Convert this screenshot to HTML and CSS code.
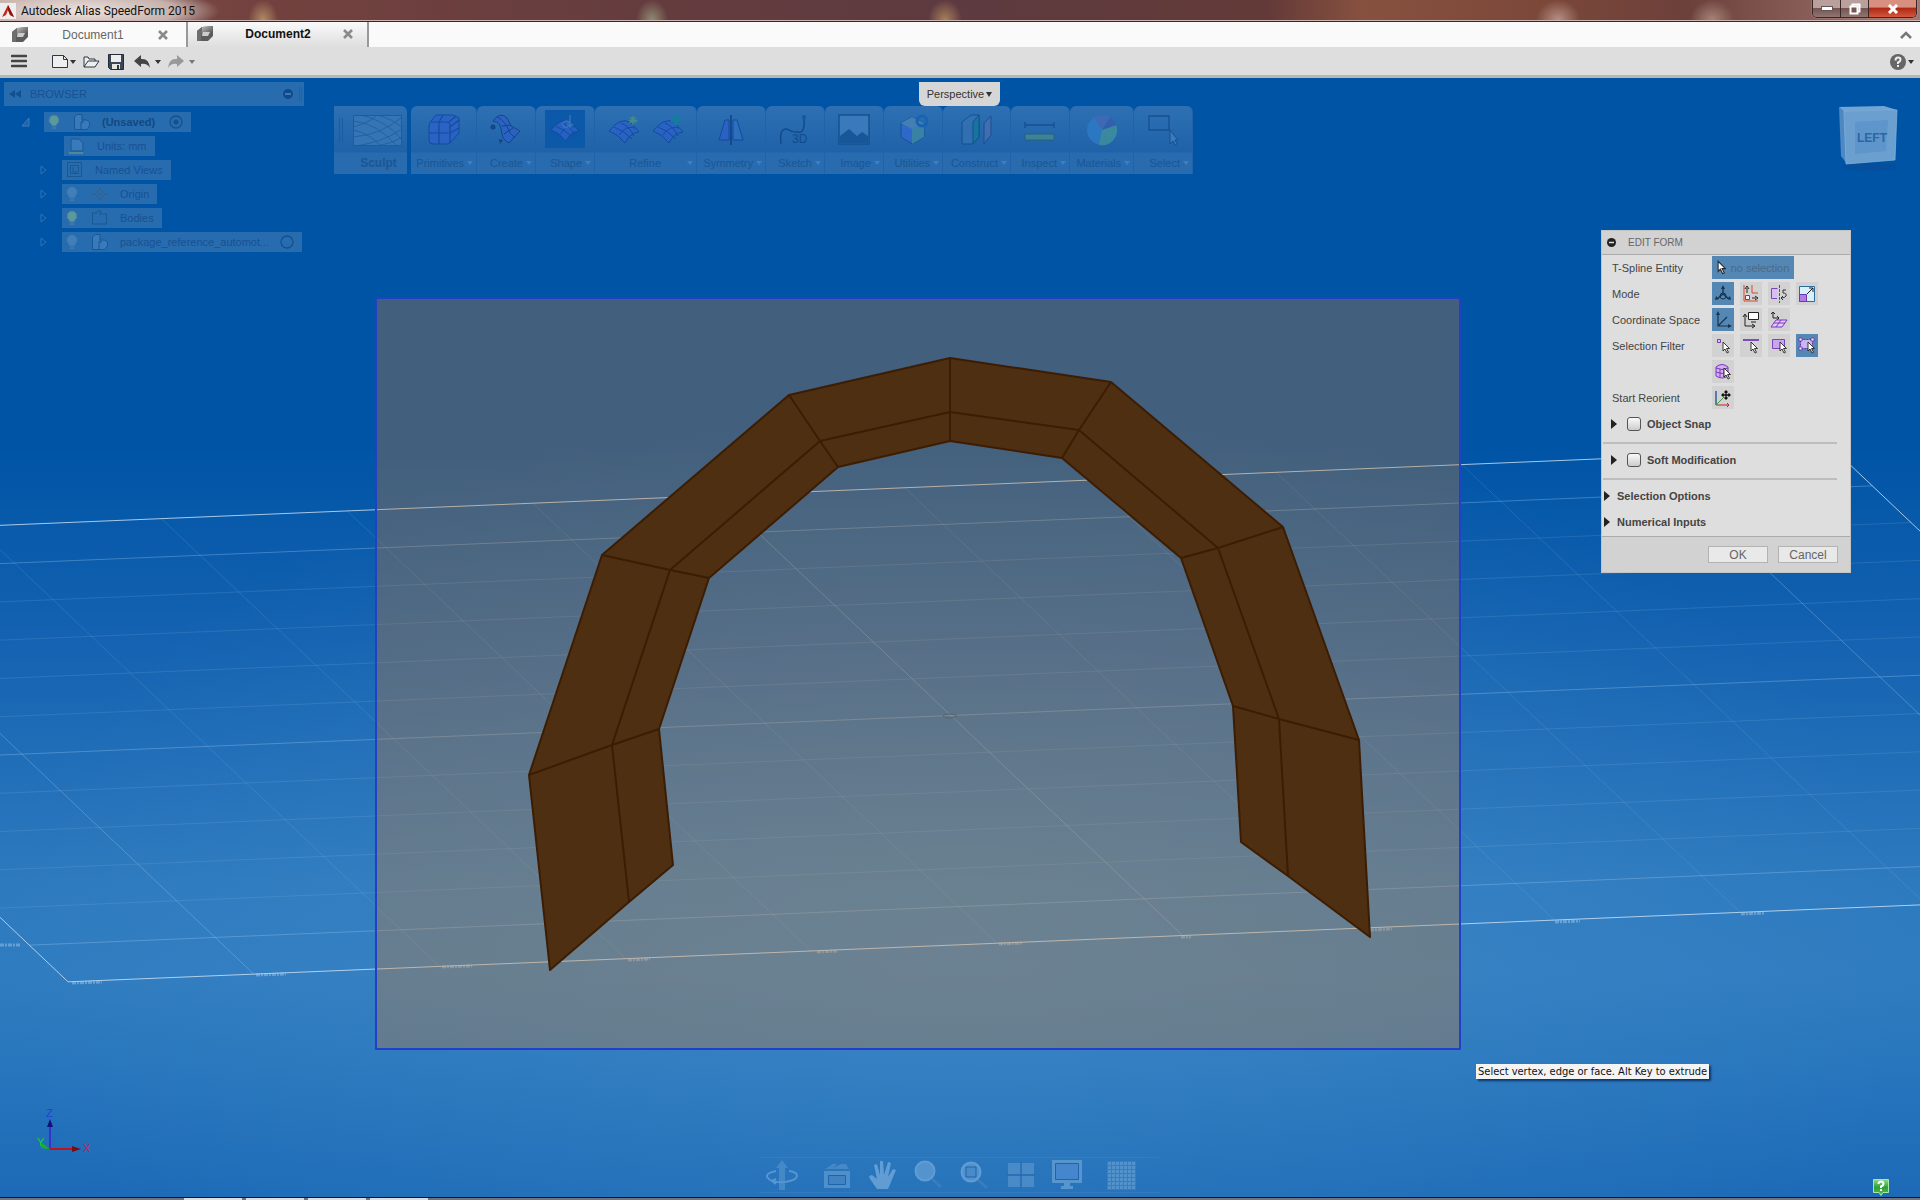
FILE: index.html
```html
<!DOCTYPE html>
<html lang="en">
<head>
<meta charset="utf-8">
<title>Autodesk Alias SpeedForm 2015</title>
<link rel="stylesheet" href="styles.css">
</head>
<body>
<svg class="defs" aria-hidden="true">
  <defs>
    <linearGradient id="cubeGrey" x1="0" y1="0" x2="1" y2="1"><stop offset="0" stop-color="#bbb"/><stop offset="1" stop-color="#444"/></linearGradient>
    <linearGradient id="helpGreen" x1="0" y1="0" x2="0" y2="1"><stop offset="0" stop-color="#8bdc85"/><stop offset=".5" stop-color="#2f9f35"/><stop offset="1" stop-color="#55c458"/></linearGradient>
    <linearGradient id="sky" x1="0" y1="0" x2="0" y2="1"><stop offset="0" stop-color="#0054a6"/><stop offset=".33" stop-color="#0054a6"/><stop offset=".5" stop-color="#1462b1"/><stop offset=".72" stop-color="#2d7abf"/><stop offset=".8" stop-color="#307cc0"/><stop offset=".88" stop-color="#2876bd"/><stop offset="1" stop-color="#1c6ab7"/></linearGradient>
    <radialGradient id="glow" cx=".5" cy=".78" r=".5"><stop offset="0" stop-color="#5c9fd0" stop-opacity=".3"/><stop offset="1" stop-color="#5c9fd0" stop-opacity="0"/></radialGradient>
    <symbol id="doc" viewBox="0 0 16 16"><path d="M0 5l5-4 11-1v10l-5 5H0z" fill="#5c5c5c"/><path d="M5 1l11-1v6l-4 3H5z" fill="url(#cubeGrey)"/><path d="M6 6h7l-2 4H5z" fill="#ccc"/><path d="M0 5l5-4v5l-1 4v5H0z" fill="#6e6e6e"/></symbol>
    <symbol id="close" viewBox="0 0 10 10"><path d="M1 1l8 8M9 1L1 9" stroke="#8a8a8a" stroke-width="2.6"/></symbol>
    <symbol id="cursor" viewBox="0 0 8 13"><path d="M1 1v9l2-2 2 4 1.500-.7-2-3.800H7.500z" fill="#fff" stroke="#222" stroke-width=".9"/></symbol>
    <symbol id="bulb" viewBox="0 0 12 16"><path d="M6 1a5 5 0 0 0-3 9l1 2h4l1-2a5 5 0 0 0-3-9z" fill="currentColor" stroke="#3f79a8"/><path d="M4 13h4v2H4z" fill="#3f79a8"/></symbol>
    <symbol id="part" viewBox="0 0 18 18"><path d="M1.500 4L4 1.500h5V7h5l2.500 2.500V13L14 16.500H1.500zM8 16.500V9l2-2M8 9h3" fill="#387abb" stroke="#1b5791"/></symbol>
    <symbol id="patch" viewBox="0 0 32 30"><path d="M1 16Q12 2 22 7l9 10Q22 18 17 28 10 19 1 16z" fill="#2b62c8" stroke="#10479c"/><path d="M6 12q9 3 18 12M13 8q8 3 13 13M11 20Q18 10 27 13" fill="none" stroke="#10479c"/></symbol>
  </defs>
</svg>

<header class="titlebar">
  <svg class="logo" viewBox="0 0 16 16"><rect width="16" height="16" fill="#eee"/><path d="M8 2l6 12-4-2-2-5-2 5-4 2z" fill="#c9241b"/><path d="M8 2l6 12-4-2-2-5z" fill="#8d1710"/></svg>
  <h1>Autodesk Alias SpeedForm 2015</h1>
  <div class="window-buttons">
    <button aria-label="Minimize"><svg width="12" height="5"><rect x=".5" y=".5" width="11" height="4" fill="#fff" stroke="#655"/></svg></button>
    <button aria-label="Restore"><svg width="12" height="12"><path d="M3.500 1.500h7v7h-7z" fill="none" stroke="#fff" stroke-width="2"/><path d="M1.500 3.500h7v7h-7z" fill="#755" stroke="#fff" stroke-width="2"/></svg></button>
    <button class="quit" aria-label="Close"><svg width="12" height="10"><path d="M2 1l8 8M10 1L2 9" stroke="#fff" stroke-width="3"/></svg></button>
  </div>
</header>

<nav class="tabs">
  <div class="tab"><svg class="i16"><use href="#doc"/></svg><button class="tab-name">Document1</button><button class="tab-close" aria-label="Close Document1"><svg class="i10"><use href="#close"/></svg></button></div>
  <div class="tab active"><svg class="i16"><use href="#doc"/></svg><button class="tab-name">Document2</button><button class="tab-close" aria-label="Close Document2"><svg class="i10"><use href="#close"/></svg></button></div>
  <button class="collapse" aria-label="Collapse"><svg width="12" height="8"><path d="M1 7l5-5 5 5" fill="none" stroke="#777" stroke-width="2.500"/></svg></button>
</nav>

<div class="toolbar">
  <button class="menu" aria-label="Menu"><svg width="16" height="14"><path d="M1 2h14M1 7h14M1 12h14" stroke="#444" stroke-width="2.600" stroke-linecap="round"/></svg></button>
  <button aria-label="New"><svg width="24" height="16"><path d="M.5 1.500h11l4 4v8H.5z" fill="#eee" stroke="#2d3644"/><path d="M11.500 1.500v4h4" fill="none" stroke="#2d3644"/><path d="M18 6h6l-3 4z" fill="#333"/></svg></button>
  <button aria-label="Open"><svg width="18" height="16"><path d="M1 13V3h4l1 2h6v2M1 13l4-6h11l-4 6z" fill="#eee" stroke="#2d3644"/></svg></button>
  <button aria-label="Save"><svg width="19" height="16"><path d="M.5.5h15v15h-13l-2-2z" fill="#3b4758" stroke="#232c38"/><path d="M3 1h10v7H3z" fill="#eee"/><path d="M4 10h8v5H4z" fill="#e5e5e5"/><path d="M9 11h2v4H9z" fill="#333"/></svg></button>
  <button aria-label="Undo"><svg width="27" height="16"><path d="M0 7l7-6v4q8-1 9 9-3-5-9-4v3z" fill="#444"/><path d="M21 6h6l-3 4z" fill="#333"/></svg></button>
  <button aria-label="Redo"><svg width="27" height="16"><path d="M16 7L9 1v4Q1 4 0 14q3-5 9-4v3z" fill="#999"/><path d="M21 6h6l-3 4z" fill="#777"/></svg></button>
  <button class="help" aria-label="Help"><svg width="24" height="18"><circle cx="8" cy="9" r="8" fill="#666"/><path d="M5.500 7.500q0-3 2.500-3t2.500 2.300Q10.500 8.500 8 9.500V11m0 1v2" fill="none" stroke="#eee" stroke-width="2"/><path d="M18 7h6l-3 4z" fill="#333"/></svg></button>
</div>

<main class="viewport">
  <svg class="scene" viewBox="0 78 1920 1119" preserveAspectRatio="none">
    <rect y="78" width="1920" height="1119" fill="url(#sky)"/>
    <rect y="78" width="1920" height="1119" fill="url(#glow)"/>
    <g class="grid" transform="matrix(185.8 -7.72 38.67 36.67 -396 541.8)">
      <path class="minor" d="M0 2h12M0 3h12M0 4h12M0 5h12M0 7h12M0 8h12M0 9h12M0 10h12M2 0v12M3 0v12M4 0v12M5 0v12M7 0v12M8 0v12M9 0v12M10 0v12"/>
      <path class="major" d="M0 1h12M0 6h12M0 11h12M1 0v12M6 0v12M11 0v12"/>
      <path class="edge" d="M0 0h12v12H0z"/>
    </g>
    <path class="ticks" d="M72 983l30-1M256 975l30-1M442 967l30-1M628 960l22-1M817 952l20-1M999 944l24-1M1181 937h10M1370 930l22-1M1555 922l25-1M1741 914l24-1M0 945h21"/>
    <rect class="marquee" x="376" y="298" width="1084" height="751"/>
    <ellipse cx="950" cy="716" rx="7" ry="2" fill="none" stroke="#59656a"/>
    <g class="arch">
      <path class="arch-body" d="M550 970L529 775 602 555 789 395 950 358 1111 382 1283 527 1359 740 1370 937 1288 876 1241 842 1233 706 1181 558 1062 458 950 441 838 467 709 578 659 729 673 865 629 902z"/>
      <path d="M629 902L612 745 670 570 820 441 950 412 1079 430 1218 548 1279 719 1288 876M529 775l83-30 47-16M602 555l68 15 39 8M789 395l31 46 18 26M950 358v83M1111 382l-32 48-17 28M1283 527l-65 21-37 10M1359 740l-80-21-46-13"/>
    </g>
    <g class="triad">
      <path d="M50 1149v-24" stroke="#3a2fd0" stroke-width="2"/><path d="M50 1119l3 8h-6z" fill="#10107a"/>
      <path d="M50 1149h24" stroke="#c0141c" stroke-width="2"/><path d="M81 1149l-9-3v6z" fill="#7a0c14"/>
      <path d="M50 1149l-9-1 1-5z" fill="#12b51c"/>
      <text x="46" y="1117" fill="#2a3bd8">Z</text><text x="83" y="1152" fill="#c0245c">X</text><text x="37" y="1146" fill="#17d522">Y</text>
    </g>
  </svg>

  <aside class="browser">
    <header>
      <svg width="12" height="8"><path d="M6 0v8L0 4zM12 0v8L6 4z" fill="#144f91"/></svg>
      <h2>BROWSER</h2>
      <svg width="10" height="10"><circle cx="5" cy="5" r="5" fill="#11498b"/><path d="M2 5h6" stroke="#3b79b6" stroke-width="2"/></svg>
      <svg width="3" height="14"><path d="M.5 0v14M2.500 0v14" stroke="#2461a0"/></svg>
    </header>
    <ul>
      <li class="root"><svg class="twist" viewBox="0 0 8 10"><path d="M7 1v8H0z" fill="#2361a6" stroke="#3e7dbb"/></svg><div class="node"><svg class="bulb on"><use href="#bulb"/></svg><svg class="i18"><use href="#part"/></svg><b>(Unsaved)</b><svg class="i14 end" viewBox="0 0 14 14"><circle cx="7" cy="7" r="6" fill="none" stroke="#164f8c" stroke-width="1.300"/><circle cx="7" cy="7" r="2.500" fill="#164f8c"/></svg></div></li>
      <li class="leaf"><div class="node"><svg class="i18" viewBox="0 0 18 18"><path d="M3 2h8l4 4v8H3z" fill="#387abb" stroke="#1b5791"/><path d="M1 16h14" stroke="#4e8a93" stroke-width="2"/></svg><span>Units: mm</span></div></li>
      <li><svg class="twist" viewBox="0 0 8 10"><path d="M1 1v8l5-4z" fill="none" stroke="#3272b3"/></svg><div class="node"><svg class="i18" viewBox="0 0 18 18"><path d="M1.500 1.500h14v14h-14zM4.500 4.500h8v8h-8zM7 6v5h4" fill="none" stroke="#1b5791"/></svg><span>Named Views</span></div></li>
      <li><svg class="twist" viewBox="0 0 8 10"><path d="M1 1v8l5-4z" fill="none" stroke="#3272b3"/></svg><div class="node"><svg class="bulb"><use href="#bulb"/></svg><svg class="i18" viewBox="0 0 18 18"><path d="M9 4l5 5-5 5-5-5zM1 9h4M13 9h4M9 2v3M9 13v3M7 9h4" fill="none" stroke="#3d5d80"/></svg><span>Origin</span></div></li>
      <li><svg class="twist" viewBox="0 0 8 10"><path d="M1 1v8l5-4z" fill="none" stroke="#3272b3"/></svg><div class="node"><svg class="bulb on"><use href="#bulb"/></svg><svg class="i18" viewBox="0 0 18 18"><path d="M1.500 15V4h4l1-2h4l-2 3h7v10z" fill="none" stroke="#1b5791"/></svg><span>Bodies</span></div></li>
      <li><svg class="twist" viewBox="0 0 8 10"><path d="M1 1v8l5-4z" fill="none" stroke="#3272b3"/></svg><div class="node wide"><svg class="bulb"><use href="#bulb"/></svg><svg class="i18"><use href="#part"/></svg><span>package_reference_automot...</span><svg class="i14 end" viewBox="0 0 14 14"><circle cx="7" cy="7" r="6" fill="none" stroke="#164f8c" stroke-width="1.300"/></svg></div></li>
    </ul>
  </aside>

  <div class="ribbon">
    <button class="sculpt"><span class="art"><svg width="4" height="24"><path d="M.5 0v24M3.500 0v24" stroke="#1d5b9f"/></svg><svg width="49" height="31"><path d="M.5.500h48v30H.5z" fill="#3575b5" stroke="#1f5c9c"/><path d="M0 6q24 2 44 25M0 15q16 3 28 16M8 0q26 6 40 24M25 0q14 4 24 12M0 22Q28 20 49 2M3 31Q30 27 49 14M22 31q16-2 27-9M0 12Q16 8 24 0" fill="none" stroke="#1f5c9c" stroke-width=".8"/></svg></span><b>Sculpt</b></button>
    <div class="groups">
      <button class="w66"><span class="art"><svg width="32" height="32"><path d="M1 12q0-4 3-6l4-5h17l6 3v15l-8 9-3 2H5q-4 0-4-4z" fill="#2b62c8" stroke="#10479c"/><path d="M3 8h16q3 0 3 4v17M21 8l7-6M31 6l-9 7M11 8v22M15 1l-4 7M1 19h20M22 19l9-5" fill="none" stroke="#10479c" stroke-width="1.200"/></svg></span><span class="cap">Primitives</span></button>
      <button class="w59"><span class="art"><svg width="32" height="32"><path d="M3 7Q10-3 17 4l4 8q4 2 9 5l-11 12q-6-3-7-9-1-10-5-12z" fill="#2b62c8" stroke="#123f7d"/><path d="M7 3q8 3 13 16l5 5M12 12l9-1M14 20l9-6" fill="none" stroke="#123f7d"/><circle cx="3" cy="13" r="2.500" fill="#123f7d"/><path d="M9 25l4 1-3 4z" fill="#123f7d"/></svg></span><span class="cap">Create</span></button>
      <button class="w59"><span class="art picked"><svg width="30" height="30"><use href="#patch"/><path d="M20 1v12m-3-3l3 3 3-3M12 10q5-6 8 0-4 8-8 0z" fill="none" stroke="#3a7cc0" stroke-width="1.400"/></svg></span><span class="cap">Shape</span></button>
      <button class="w102"><span class="art two"><svg width="32" height="30"><use href="#patch"/><path d="M25 1v9M20.500 5.500h9M22 2l6 6M28 2l-6 6" stroke="#4b9281" stroke-width="1.400"/></svg><svg width="32" height="30"><use href="#patch"/><path d="M24 0v10M19 5h10" stroke="#137f9c" stroke-width="4"/></svg></span><span class="cap">Refine</span></button>
      <button class="w69"><span class="art"><svg width="28" height="30"><path d="M12 5v20H2L8 5z" fill="#2b62c8" stroke="#10479c"/><path d="M16 5h4l6 20H16z" fill="#2f70c0" stroke="#10479c"/><path d="M14 0v30" stroke="#0c376f" stroke-width="1.400"/></svg></span><span class="cap">Symmetry</span></button>
      <button class="w59"><span class="art"><svg width="34" height="34"><path d="M3 31q-2-16 6-15 6 4 14 3 4-2 3-14" fill="none" stroke="#0f4687" stroke-width="1.500"/><circle cx="26" cy="4" r="2" fill="#13549c"/><text x="14" y="30">3D</text></svg></span><span class="cap">Sketch</span></button>
      <button class="w59"><span class="art"><svg width="32" height="32"><path d="M1 1h30v29H1z" fill="#3c7dbd" stroke="#134d8d" stroke-width="1.500"/><path d="M2 22l9-7 8 7 5-4 6 4v7H2z" fill="#155596"/></svg></span><span class="cap">Image</span></button>
      <button class="w59"><span class="art"><svg width="30" height="32"><path d="M3 9l11-6 12 6v14l-12 7-11-7z" fill="#3069cf" stroke="#174b8e"/><path d="M3 9l11-6 12 6-12 6z" fill="#4883b4"/><path d="M14 15l12-6v14l-12 7z" fill="#3d87a5"/><circle cx="24" cy="7" r="5" fill="none" stroke="#1462b6" stroke-width="3"/></svg></span><span class="cap">Utilities</span></button>
      <button class="w68"><span class="art"><svg width="32" height="32"><path d="M1 8l9-7h8v22l-6 7H1z" fill="#3371b2" stroke="#134d8d"/><path d="M12 8l6-7v22l-6 7z" fill="#147899" stroke="#134d8d"/><path d="M23 9l7-7v19l-7 9z" fill="#476eaf" stroke="#134d8d"/></svg></span><span class="cap">Construct</span></button>
      <button class="w59"><span class="art"><svg width="32" height="28"><path d="M1 6v6M30 6v6M1 9h29" stroke="#134d8d" stroke-width="1.300"/><path d="M1 18h29v6H1z" fill="#408b8e" stroke="#285f80"/></svg></span><span class="cap">Inspect</span></button>
      <button class="w64"><span class="art"><svg width="32" height="32"><circle cx="16" cy="16" r="15" fill="#2d7ac6"/><path d="M16 16L8 3a15 15 0 0 1 16 0z" fill="#4269b7"/><path d="M16 16l14-5a15 15 0 0 1-17 20z" fill="#3f8f9d"/><path d="M16 16L24 3a15 15 0 0 1 6 8z" fill="#355dac"/></svg></span><span class="cap">Materials</span></button>
      <button class="w59"><span class="art"><svg width="32" height="32"><path d="M2 2h20v14H2z" fill="none" stroke="#134d8d" stroke-width="1.400"/><path d="M23 16v14l3-3 2 4 2-1-2-4h3z" fill="#3e7fbd" stroke="#134d8d"/></svg></span><span class="cap">Select</span></button>
    </div>
  </div>

  <button class="camera">Perspective<svg width="6" height="5"><path d="M0 0h6L3 5z" fill="#333"/></svg></button>

  <aside class="right">
    <svg class="cube" width="66" height="66" viewBox="0 0 66 66">
      <ellipse cx="34" cy="61" rx="28" ry="4" fill="#0a4a92" opacity=".5"/>
      <path d="M4 1l45-1 13 4L8 5z" fill="#74a5d2"/><path d="M4 1l5 4 3 53-6-8z" fill="#4d88c2"/><path d="M9 5l53-1-2 50-49 4z" fill="#6a9fd0" stroke="#86b4de" stroke-width=".7"/><path d="M20 16l33-2-2 31-31 3z" fill="#5e96cb"/>
      <text x="22" y="36">LEFT</text>
    </svg>

    <form class="panel">
      <header><svg width="9" height="9"><circle cx="4.500" cy="4.500" r="4.500" fill="#222"/><path d="M2 4.500h5" stroke="#ddd" stroke-width="1.500"/></svg><h2>EDIT FORM</h2></header>
      <div class="fields">
        <span>T-Spline Entity</span>
        <div><button type="button" class="pick"><svg width="9" height="15"><use href="#cursor"/></svg>no selection</button></div>
        <span>Mode</span>
        <div>
          <button type="button" class="on" aria-label="Multi"><svg width="18" height="18"><path d="M9 3v6l-6 5M9 9l6 5" fill="none" stroke="#173550" stroke-width="1.400"/><path d="M9 0l2 4H7zM1 15l1-4 3 3zM17 15l-1-4-3 3z" fill="#173550"/><circle cx="9" cy="11" r="3" fill="none" stroke="#173550"/></svg></button>
          <button type="button" aria-label="Translate"><svg width="18" height="18"><path d="M2 0v16h14M10 0v8h6" fill="none" stroke="#d9472b"/><path d="M5 8V3M3 4l2-3 2 3M10 13h4m-1-2l3 2-3 2" fill="none" stroke="#222"/><path d="M3.500 10.500h4v4h-4z" fill="#fff" stroke="#6b3aa8"/></svg></button>
          <button type="button" aria-label="Rotate"><svg width="18" height="18"><path d="M7 13.500H1.500v-10h6" fill="#d7bff2" stroke="#7b45b8"/><path d="M9.500 0v18" stroke="#d02030" stroke-dasharray="3 1"/><path d="M16 5h-3v3q4 0 3 3-1 2-5 2l2-2m-2 2l2 2" fill="none" stroke="#333"/></svg></button>
          <button type="button" aria-label="Scale"><svg width="18" height="18"><path d="M1.500 1.500h15v15h-15z" fill="#d6f1fc" stroke="#2d6d9c"/><path d="M1.500 9.500h7v7h-7z" fill="#b47be8" stroke="#6b3aa8"/><path d="M9 9l6-6m-4 0h4v4" fill="none" stroke="#222"/></svg></button>
        </div>
        <span>Coordinate Space</span>
        <div>
          <button type="button" class="on" aria-label="World"><svg width="18" height="18"><path d="M4 3v12h11M4 15l9-9" fill="none" stroke="#173550" stroke-width="1.200"/><path d="M4 0l2 4H2zM18 15l-4-2v4z" fill="#173550"/></svg></button>
          <button type="button" aria-label="View"><svg width="18" height="18"><path d="M3 4v11h9M1 6l2-3 2 3M10 13l3 2-3 2" fill="none" stroke="#222"/><path d="M6.500 1.500h10v7h-10zM9 11h5" fill="#fff" stroke="#222"/></svg></button>
          <button type="button" aria-label="Local"><svg width="18" height="18"><path d="M3 1v6h6M1 3l2-2 2 2M7 5l2 2-2 2" fill="none" stroke="#222"/><path d="M6 9h11l-5 7H1zM4 12h11M11 9l-5 7" fill="#e5cffa" stroke="#7b35c0"/></svg></button>
        </div>
        <span>Selection Filter</span>
        <div>
          <button type="button" aria-label="Vertex"><svg width="18" height="18"><path d="M3.500 2.500h3v3h-3z" fill="none" stroke="#7b35c0"/><svg x="8" y="4" width="8" height="13"><use href="#cursor"/></svg></svg></button>
          <button type="button" aria-label="Edge"><svg width="18" height="18"><path d="M1 3h16" stroke="#6b2ab0" stroke-width="1.600"/><svg x="8" y="4" width="8" height="13"><use href="#cursor"/></svg></svg></button>
          <button type="button" aria-label="Face"><svg width="18" height="18"><path d="M2.500 2.500h12v9h-12z" fill="#c9a5ef" stroke="#7b45b8"/><svg x="9" y="4" width="8" height="13"><use href="#cursor"/></svg></svg></button>
          <button type="button" class="on" aria-label="All"><svg width="18" height="18"><path d="M2.500 2.500h12v9h-12z" fill="#c9b5ef" stroke="#6b2ab0" stroke-dasharray="2 1"/><path d="M1 1h3v3H1zM13 1h3v3h-3zM1 10h3v3H1z" fill="#eee" stroke="#6b2ab0" stroke-width=".8"/><svg x="9" y="4" width="8" height="13"><use href="#cursor"/></svg></svg></button>
        </div>
        <span></span>
        <div><button type="button" aria-label="Body"><svg width="18" height="18"><path d="M2 4q6-5 12 0v9q-6 4-12 0z" fill="#d2b0f2" stroke="#7b35c0"/><path d="M2 5q6 3 12 0M2 9q6 3 12 0M6 6v8M10 6v8" fill="none" stroke="#7b35c0"/><svg x="9" y="4" width="8" height="13"><use href="#cursor"/></svg></svg></button></div>
        <span>Start Reorient</span>
        <div><button type="button" aria-label="Start Reorient"><svg width="18" height="18"><path d="M2 2v14" stroke="#28559c" stroke-width="1.400"/><path d="M2 16h13m-2-2l2 2-2 2" stroke="#c02035" fill="none"/><path d="M2 16l8-8" stroke="#3aa03a"/><path d="M12 2v8M8 6h8M10.500 3.500L12 2l1.500 1.500M10.500 8.500L12 10l1.500-1.500M9.500 4.500L8 6l1.500 1.500M14.500 4.500L16 6l-1.500 1.500" fill="none" stroke="#111" stroke-width="1.300"/></svg></button></div>
      </div>
      <div class="option"><button type="button" class="tri" aria-label="Expand Object Snap"></button><label><input type="checkbox">Object Snap</label></div>
      <hr>
      <div class="option"><button type="button" class="tri" aria-label="Expand Soft Modification"></button><label><input type="checkbox">Soft Modification</label></div>
      <hr>
      <button type="button" class="section">Selection Options</button>
      <button type="button" class="section">Numerical Inputs</button>
      <footer><button type="button">OK</button><button type="button">Cancel</button></footer>
    </form>
  </aside>

  <div class="tooltip" role="tooltip">Select vertex, edge or face. Alt Key to extrude</div>

  <div class="navbar">
    <button class="drop" aria-label="Orbit"><svg width="32" height="32"><path d="M16 1l6 8h-3v22h-6V9h-3z" fill="#4b8cc8"/><path d="M10 12q-10 2-9 6 4 6 18 5 12-2 12-6 0-4-8-5M10 20l-4 2 4 3" fill="none" stroke="#5e9dd4" stroke-width="2"/></svg></button>
    <button aria-label="Look at"><svg width="28" height="28"><path d="M2 8l8-5h4l-4 4 8-4h5l3 5z" fill="#4b8cc8"/><path d="M1 10h26v17H1z" fill="#5795cd"/><path d="M5.500 14.500h17v9h-17z" fill="#4685c5" stroke="#1d62a8"/></svg></button>
    <button aria-label="Pan"><svg width="30" height="30"><path d="M9 29L2 19l-1-3 3-1 5 4L6 5l3-1 3 11V1h3l1 14 4-13 3 1-3 14 5-8 3 1-5 12-3 7z" fill="#6ba5d9"/></svg></button>
    <button aria-label="Zoom"><svg width="30" height="30"><circle cx="11" cy="11" r="9.500" fill="#5b9ad3" stroke="#69a4d9" stroke-width="2"/><path d="M18 19l9 8" stroke="#3f7fbb" stroke-width="3"/></svg></button>
    <button aria-label="Fit"><svg width="30" height="30"><circle cx="11" cy="12" r="9.500" fill="#5b9ad3" stroke="#69a4d9" stroke-width="2"/><path d="M6 7h10v10H6z" fill="#4f90cd" stroke="#1d5fa8"/><path d="M18 20l9 8" stroke="#3f7fbb" stroke-width="3"/></svg></button>
    <button aria-label="Views"><svg width="28" height="26"><path d="M1 1h26v24H1z" fill="#4f8fcb"/><path d="M14 0v26M0 13h28" stroke="#2368b0" stroke-width="1.400"/></svg></button>
    <button aria-label="Display"><svg width="30" height="30"><path d="M0 0h30v23H0z" fill="#5f9bd1"/><path d="M3.500 3.500h23v16h-23z" fill="#4a8ad0" stroke="#1f61aa"/><path d="M12 23h6v3h3v3H9v-3h3z" fill="#5f9bd1"/></svg></button>
    <button class="last" aria-label="Grid"><svg width="29" height="29"><path d="M0 0h29v29H0z" fill="#5a98d0"/><path d="M.5 0v29M4.500 0v29M8.500 0v29M12.500 0v29M16.500 0v29M20.500 0v29M24.500 0v29M28.500 0v29M0 .5h29M0 4.500h29M0 8.500h29M0 12.500h29M0 16.500h29M0 20.500h29M0 24.500h29M0 28.500h29" stroke="#3c7fbf"/></svg></button>
  </div>

  <button class="assist" aria-label="Assistance"><svg width="16" height="17"><path d="M.5.500h15v13H10l-2 3-2-3H.5z" fill="url(#helpGreen)" stroke="#a8e8a6"/><path d="M5.500 5q0-2.500 2.500-2.500T10.500 5Q10.500 6.500 8 7.500V9m0 1v2" fill="none" stroke="#fff" stroke-width="2"/></svg></button>
</main>
<div class="taskbar"><i></i><i></i><i></i><i></i></div>
</body>
</html>
```
FILE: styles.css
```css
* { box-sizing: border-box; }
body {
  margin: 0;
  height: 100vh;
  display: flex;
  flex-direction: column;
  overflow: hidden;
  font: 11px/14px "Liberation Sans", Arial, sans-serif;
  color: #444;
}
button { border: 0; padding: 0; background: none; font: inherit; color: inherit; }
svg { display: block; flex: none; }
h1, h2, ul { margin: 0; padding: 0; font-weight: normal; list-style: none; }
.defs { position: absolute; width: 0; height: 0; }
.i10 { width: 10px; height: 10px; }
.i14 { width: 14px; height: 14px; }
.i16 { width: 16px; height: 16px; }
.i18 { width: 18px; height: 18px; }

.titlebar {
  flex: none;
  height: 22px;
  display: flex;
  align-items: flex-start;
  padding: 0 3px 0 0;
  border-bottom: 1px solid #3a2527;
  box-shadow: inset 0 -1px #cbb3b0;
  background:
    radial-gradient(closest-side, #eee4e0 0, #d8c8c3cc 70%, transparent) -60px -14px / 280px 50px no-repeat,
    radial-gradient(closest-side, #b08a63, transparent) 248px 0 / 30px 40px no-repeat,
    radial-gradient(closest-side, #8f8a72, transparent) 636px 0 / 32px 40px no-repeat,
    radial-gradient(closest-side, #a87f5a, transparent) 928px 0 / 34px 40px no-repeat,
    radial-gradient(closest-side, #b58f83, transparent) 1536px 0 / 44px 40px no-repeat,
    radial-gradient(closest-side, #a78478, transparent) 1690px 0 / 44px 40px no-repeat,
    linear-gradient(90deg, #8a6560, #74423f 12%, #643c3e 35%, #5d3a40 50%, #633a38 66%, #87513f 71%, #7c4839 80%, #6c403b 88%, #a47872);
}
.logo { width: 16px; height: 16px; margin-top: 3px; }
.titlebar h1 { margin-left: 5px; font: 12px/22px Roboto, "Open Sans", sans-serif; color: #111; }
.window-buttons { margin-left: auto; display: flex; border: 1px solid #3b2626; border-top: 0; border-radius: 0 0 5px 5px; overflow: hidden; box-shadow: 0 0 1px #fff; }
.window-buttons button { width: 28px; height: 17px; display: flex; align-items: center; justify-content: center; background: linear-gradient(#b9a09d 45%, #755553 50%, #917572); border-right: 1px solid #3b2626; }
.window-buttons .quit { width: 47px; border: 0; background: linear-gradient(#d98f80 40%, #b02a17 50%, #d4573b); }

.tabs { flex: none; height: 25px; display: flex; background: #fafafa; }
.tab { width: 188px; display: flex; align-items: center; padding: 0 18px 0 12px; border-right: 2px solid #999; font-size: 12px; color: #666; }
.tab.active { width: 181px; padding: 0 14px 2px 9px; background: linear-gradient(#fafafa, #dedede); color: #111; font-weight: bold; }
.tab-name { flex: 1; text-align: center; }
.collapse { margin: 0 8px 0 auto; }

.toolbar { flex: none; height: 31px; display: flex; align-items: center; gap: 7px; padding: 1px 6px 0 11px; background: #dedede; border-bottom: 3px solid #b9b7b2; }
.toolbar .menu { margin: 0 18px 2px 0; }
.toolbar .help { margin-left: auto; }

.viewport { position: relative; flex: 1; min-height: 0; display: flex; align-items: flex-start; padding: 4px; }
.scene { position: absolute; inset: 0; width: 100%; height: 100%; }
.grid path { fill: none; stroke: #9cc4ec; vector-effect: non-scaling-stroke; stroke-width: 1px; }
.grid .minor { stroke-opacity: .16; }
.grid .major { stroke-opacity: .36; }
.grid .edge { stroke: #cfe4f5; stroke-opacity: .8; }
.ticks { stroke: #a9cdee; stroke-width: 3px; stroke-dasharray: 4 1 2 1; stroke-opacity: .45; }
.marquee { fill: rgba(220, 124, 29, .3); stroke: #2140c8; stroke-width: 2px; }
.arch path { fill: none; stroke: #3c1d03; stroke-width: 2px; stroke-linejoin: round; }
.arch .arch-body { fill: #4f2f11; }
.triad text { font-size: 11px; }

.browser { position: relative; width: 300px; color: #17518f; }
.browser > header { height: 24px; display: flex; align-items: center; gap: 6px; padding: 0 2px 0 5px; background: #286cb0; }
.browser h2 { flex: 1; margin-left: 3px; font-size: 11px; }
.browser ul { display: grid; gap: 4px; margin-top: 6px; }
.browser li { display: flex; align-items: center; gap: 14px; padding: 0 4px 0 36px; }
.browser li.root { padding-left: 18px; }
.browser li.leaf { padding-left: 60px; }
.twist { width: 8px; height: 10px; }
.node { height: 20px; display: flex; align-items: center; gap: 11px; padding: 0 8px 0 4px; background: #286cb0; white-space: nowrap; }
.node .end { margin-left: 3px; }
.node.wide { flex: 1; }
.node.wide .end { margin-left: auto; }
.bulb { width: 12px; height: 16px; color: #417fbb; }
.bulb.on { color: #5b9a9a; }
.bulb + .i18 { margin-left: 2px; }
.root b { color: #124883; }

.ribbon { position: relative; display: flex; gap: 4px; margin: 24px 0 0 30px; color: #1a5694; }
.groups { display: flex; }
.ribbon button { height: 68px; display: flex; flex-direction: column; align-items: center; border-radius: 6px 6px 0 0; background: linear-gradient(#2e70b3, #1f62a8 46px, #286bae 47px, #286bae); }
.groups button { border-right: 1px solid #2162a9; }
.ribbon .sculpt { width: 73px; border-radius: 0 6px 0 0; }
.sculpt b { padding-left: 16px; font-size: 12px; line-height: 22px; }
.art { height: 46px; display: flex; align-items: center; justify-content: center; gap: 10px; padding-top: 2px; }
.groups .art svg { opacity: .85; }
.art.picked { width: 40px; height: 38px; margin: 4px 0; padding: 0; background: #0d59a9; }
.two { gap: 12px; }
.art text { font-size: 12px; fill: #0f4687; }
.cap { align-self: stretch; line-height: 22px; white-space: nowrap; display: flex; align-items: center; justify-content: flex-end; padding-right: 3px; }
.cap::after { content: ""; margin-left: 3px; border: 3px solid transparent; border-top: 4px solid #3e80bf; border-bottom: 0; }
.w59 { width: 59px; }
.w64 { width: 64px; }
.w66 { width: 66px; }
.w68 { width: 68px; }
.w69 { width: 69px; }
.w102 { width: 102px; }
.w102 .cap::after { margin-left: 26px; }

.camera { position: absolute; top: 4px; left: 50%; width: 81px; height: 24px; margin-left: -41px; display: flex; align-items: center; justify-content: center; gap: 2px; background: #d6d6d6; border-radius: 0 0 6px 6px; color: #333; }

.right { position: relative; margin: 24px 65px 0 auto; width: 250px; display: flex; flex-direction: column; }
.cube { align-self: flex-end; margin-right: -50px; }
.cube text { font: bold 12px "Liberation Sans", sans-serif; fill: #2c66a3; }
.panel { margin-top: 58px; background: #dedede; border: 1px solid #c4c4c4; }
.panel header { height: 24px; display: flex; align-items: center; gap: 12px; padding-left: 5px; background: #d2d2d2; border-bottom: 1px solid #aaa; color: #666; }
.panel h2 { font-size: 10px; }
.fields { display: grid; grid-template-columns: 100px 1fr; row-gap: 3px; align-items: center; padding: 1px 0 2px 10px; }
.fields div { display: flex; gap: 6px; height: 23px; }
.fields button { width: 22px; height: 23px; display: flex; align-items: center; justify-content: center; background: #d2d2d2; }
.fields .on, .fields .pick { background: #5487b4; }
.fields .pick { width: 82px; gap: 5px; color: #4a6a88; }
.option { height: 26px; display: flex; align-items: center; gap: 10px; padding-left: 9px; font-weight: bold; }
.option label { display: flex; align-items: center; gap: 6px; }
.option input { appearance: none; width: 14px; height: 14px; margin: 0; border: 1px solid #555; border-radius: 3px; background: linear-gradient(#fafafa, #ccc); }
.tri, .section::before { content: ""; border: 5px solid transparent; border-left: 6px solid #222; border-right: 0; }
.panel hr { height: 2px; margin: 5px 13px 3px 1px; border: 0; background: #bdbdbd; }
.section { height: 26px; display: flex; align-items: center; gap: 7px; padding-left: 2px; font-weight: bold; }
.panel hr + .section { margin-top: 3px; }
.panel footer { height: 36px; display: flex; justify-content: flex-end; align-items: center; gap: 10px; margin-top: 1px; padding-right: 12px; border-top: 1px solid #aaa; background: #d2d2d2; }
.panel footer button { width: 60px; height: 17px; border: 1px solid #b3b3b3; background: #e9e9e9; font-size: 12px; color: #666; }

.tooltip { position: absolute; left: 1476px; top: 986px; padding: 0 2px; background: #f4f4f4; box-shadow: 2px 2px 2px #0a356a; color: #111; font: 11px/15px "DejaVu Sans Condensed", "DejaVu Sans", sans-serif; white-space: nowrap; }
.navbar { position: absolute; left: 50%; bottom: 4px; width: 400px; height: 36px; margin-left: -201px; display: flex; align-items: center; border: solid #4f8dc755; border-width: 1px 0; }
.navbar button { width: 46px; display: flex; justify-content: center; }
.navbar svg { opacity: .85; }
.navbar .drop { margin-right: 9px; }
.navbar .last { margin-left: 8px; }
.assist { position: absolute; right: 31px; bottom: 1px; }
.taskbar { flex: none; height: 3px; display: flex; gap: 4px; padding-left: 184px; border-top: 1px solid #111; background: #6d7480; }
.taskbar i { width: 58px; background: #ddd; }
```
